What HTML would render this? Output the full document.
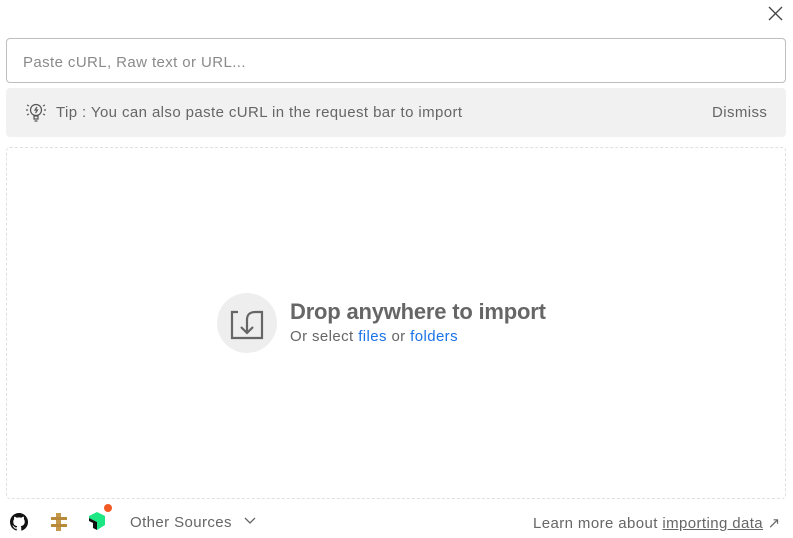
<!DOCTYPE html>
<html><head><style>
*{box-sizing:border-box;margin:0;padding:0}
body{width:793px;height:538px;background:#fff;font-family:"Liberation Sans",sans-serif;position:relative;overflow:hidden;color:#555}
.abs{position:absolute}
.t{font-size:15px;letter-spacing:0.4px}
</style></head><body>
<svg class="abs" style="left:768px;top:6px" width="15" height="15" viewBox="0 0 15 15"><path d="M1 1L14 14M14 1L1 14" stroke="#444" stroke-width="1.3"/></svg>
<div class="abs t" style="left:6px;top:38px;width:780px;height:45px;border:1px solid #bdbdbd;border-radius:4px;padding:15px 0 0 16px;color:#8a8a8a">Paste cURL, Raw text or URL...</div>
<div class="abs" style="left:6px;top:88px;width:780px;height:49px;background:#f1f1f1;border-radius:4px"></div>
<svg class="abs" style="left:25px;top:101px" width="22" height="22" viewBox="0 0 22 22" fill="none" stroke="#555" stroke-width="1.2"><circle cx="11" cy="9" r="5.5"/><path d="M9 15h4v3h-4zM9.5 20h3M12 6l-2 3h2.5l-2 3M2 4l2 1M1 9h2M2 14l2-1M20 4l-2 1M21 9h-2M20 14l-2-1"/></svg>
<div class="abs t" style="left:56px;top:104px;color:#666">Tip : You can also paste cURL in the request bar to import</div>
<div class="abs t" style="left:712px;top:104px;color:#666">Dismiss</div>
<div class="abs" style="left:6px;top:147px;width:780px;height:352px;border:1px dashed #e0e0e0;border-radius:4px"></div>
<div class="abs" style="left:217px;top:293px;width:60px;height:60px;border-radius:50%;background:#eee"></div>
<svg class="abs" style="left:230px;top:306px" width="34" height="34" viewBox="0 0 34 34" fill="none" stroke="#666" stroke-width="2.2"><path d="M8 6H2v26h30V6h-6"/><path d="M26 6c-7 0-9 3-9 8v13M11 21l6 6 6-6"/></svg>
<div class="abs" style="left:290px;top:299px;font-size:22px;font-weight:bold;color:#666;letter-spacing:-0.2px">Drop anywhere to import</div>
<div class="abs t" style="left:290px;top:328px;color:#666">Or select <span style="color:#1a73e8">files</span> or <span style="color:#1a73e8">folders</span></div>
<svg class="abs" style="left:10px;top:513px" width="18" height="18" viewBox="0 0 16 16"><path fill="#111" d="M8 0C3.58 0 0 3.58 0 8c0 3.54 2.29 6.53 5.47 7.59.4.07.55-.17.55-.38v-1.33c-2.23.48-2.7-1.07-2.7-1.07-.36-.92-.89-1.17-.89-1.17-.73-.5.06-.49.06-.49.8.06 1.23.83 1.23.83.71 1.22 1.87.87 2.33.66.07-.52.28-.87.5-1.07-1.78-.2-3.64-.89-3.64-3.95 0-.87.31-1.59.82-2.15-.08-.2-.36-1.02.08-2.12 0 0 .67-.21 2.2.82a7.6 7.6 0 0 1 4 0c1.53-1.04 2.2-.82 2.2-.82.44 1.1.16 1.92.08 2.12.51.56.82 1.27.82 2.15 0 3.07-1.87 3.75-3.65 3.95.29.25.54.73.54 1.48v2.2c0 .21.15.46.55.38A8 8 0 0 0 16 8c0-4.42-3.58-8-8-8z"/></svg>
<div class="abs" style="left:51px;top:513px;width:16px;height:18px">
<div class="abs" style="left:5px;top:0;width:5px;height:18px;background:#c49a4a"></div>
<div class="abs" style="left:0;top:4px;width:16px;height:3px;background:#b8893a"></div>
<div class="abs" style="left:0;top:11px;width:16px;height:3px;background:#b8893a"></div></div>
<svg class="abs" style="left:87px;top:511px" width="20" height="21" viewBox="0 0 20 21"><path d="M2 5l8-4 8 4v9l-8 5V11L2 7z" fill="#1ce783"/><path d="M2 7l8 4v8l-4-2v-5l-4-2z" fill="#111"/></svg>
<div class="abs" style="left:104px;top:504px;width:8px;height:8px;border-radius:50%;background:#f15a24"></div>
<div class="abs t" style="left:130px;top:514px;color:#666">Other Sources</div>
<svg class="abs" style="left:244px;top:517px" width="12" height="8" viewBox="0 0 12 8"><path d="M1 1l5 5 5-5" fill="none" stroke="#666" stroke-width="1.3"/></svg>
<div class="abs t" style="left:533px;top:514px;color:#666">Learn more about <span style="text-decoration:underline">importing data</span> ↗</div>
</body></html>
